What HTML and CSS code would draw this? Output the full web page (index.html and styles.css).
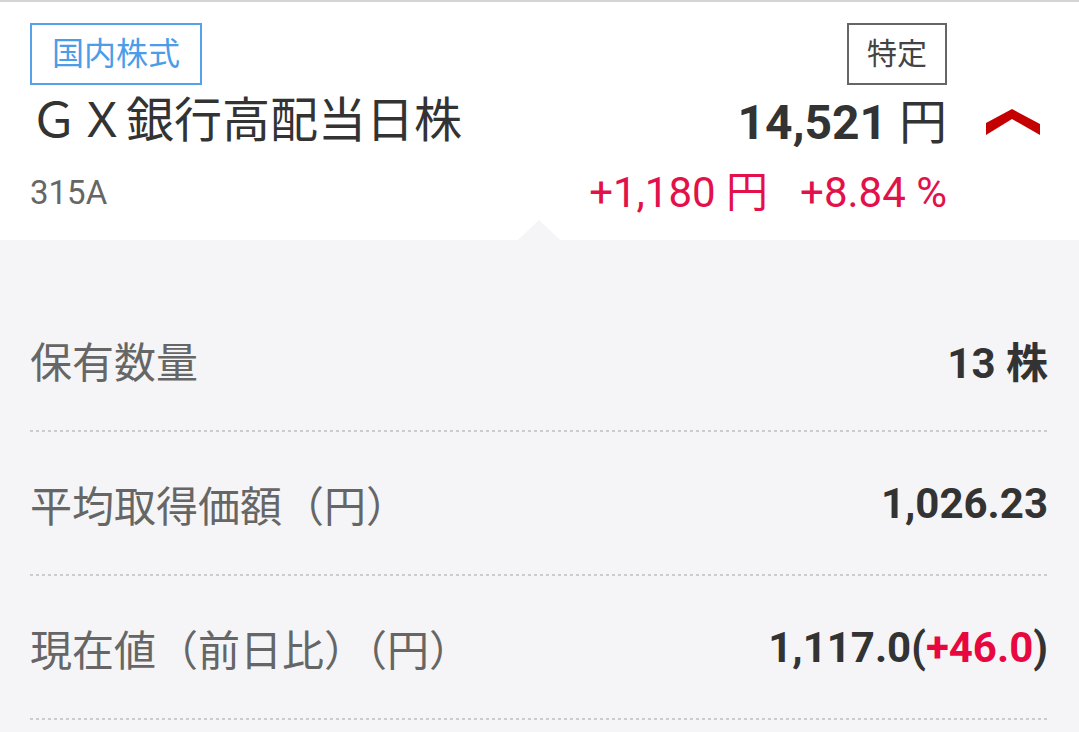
FILE: index.html
```html
<!DOCTYPE html>
<html lang="ja">
<head>
  <meta charset="UTF-8" />
  <title>保有銘柄</title>
  <meta name="viewport" content="width=device-width, initial-scale=1.0" />
  <link rel="stylesheet" href="styles.css">
</head>
<body>

  <section class="holding-head">
    <div class="head-left">
      <span class="tag tag-market">国内株式</span>
      <div class="name">ＧＸ銀行高配当日株</div>
      <div class="code">315A</div>
    </div>

    <div class="head-right">
      <span class="tag tag-account">特定</span>
      <div class="price"><b>14,521</b> 円</div>
      <div class="change"><span>+1,180 円</span><span>+8.84 %</span></div>
    </div>

    <div class="toggle">
      <!-- 折りたたみ（上向き） -->
      <svg width="54" height="27" viewBox="0 0 54 27">
        <polygon points="0,14 26,0 54,15 54,26 26,10 0,26" fill="#c40000" />
      </svg>
    </div>

    <span class="notch"></span>
  </section>

  <section class="holding-detail">
    <div class="row">
      <span class="label">保有数量</span>
      <span class="value">13 株</span>
    </div>
    <div class="row">
      <span class="label">平均取得価額（円）</span>
      <span class="value">1,026.23</span>
    </div>
    <div class="row">
      <span class="label">現在値（前日比）（円）</span>
      <span class="value">1,117.0(<span class="up">+46.0</span>)</span>
    </div>
  </section>

</body>
</html>
```

FILE: styles.css
```css
body {
  margin: 0;
  font-family: Roboto, "Noto Sans CJK JP", sans-serif;
  background-color: #f5f5f7;
  color: #333;
}

.holding-head {
  position: relative;
  display: flex;
  background-color: #fff;
  border-top: 2px solid #d4d4d4;
  padding: 21px 0 27px 30px;
}

.head-left {
  flex: 1;
  display: flex;
  flex-direction: column;
  align-items: flex-start;
}

.head-right {
  display: flex;
  flex-direction: column;
  align-items: flex-end;
}

.tag {
  box-sizing: border-box;
  height: 62px;
  line-height: 58px;
  font-size: 32px;
  border: 2px solid;
  padding: 0 20px;
}

.tag-market {
  color: #4b9de9;
  border-color: #55a2ea;
}

.tag-account {
  color: #444;
  border-color: #666;
  font-size: 30px;
  padding: 0 18px;
}

.name {
  margin-top: 12px;
  font-size: 48px;
  line-height: 48px;
  color: #333;
}

.code {
  margin-top: 28px;
  font-size: 33px;
  line-height: 40px;
  color: #666;
}

.price {
  margin-top: 14px;
  font-size: 48px;
  line-height: 48px;
  color: #333;
}

.price b {
  font-weight: bold;
}

.change {
  margin-top: 26px;
  font-size: 42px;
  line-height: 40px;
  color: #e2114a;
  display: flex;
  gap: 32px;
}

.toggle {
  width: 132px;
  display: flex;
  justify-content: center;
  padding-top: 86px;
}

.toggle svg {
  display: block;
}

.notch {
  position: absolute;
  left: 518px;
  bottom: 0;
  width: 0;
  height: 0;
  border-left: 21px solid transparent;
  border-right: 21px solid transparent;
  border-bottom: 20px solid #f5f5f7;
}

.holding-detail {
  padding: 48px 31px 0 30px;
}

.row {
  display: flex;
  justify-content: space-between;
  align-items: center;
  height: 142px;
  background-image: linear-gradient(to right, #cccccc 50%, transparent 50%);
  background-size: 6px 2px;
  background-repeat: repeat-x;
  background-position: left bottom;
  padding-bottom: 2px;
}

.label {
  font-size: 42px;
  color: #666;
}

.value {
  font-size: 42px;
  font-weight: bold;
  color: #333;
}

.value .up {
  color: #e8083f;
}
```
